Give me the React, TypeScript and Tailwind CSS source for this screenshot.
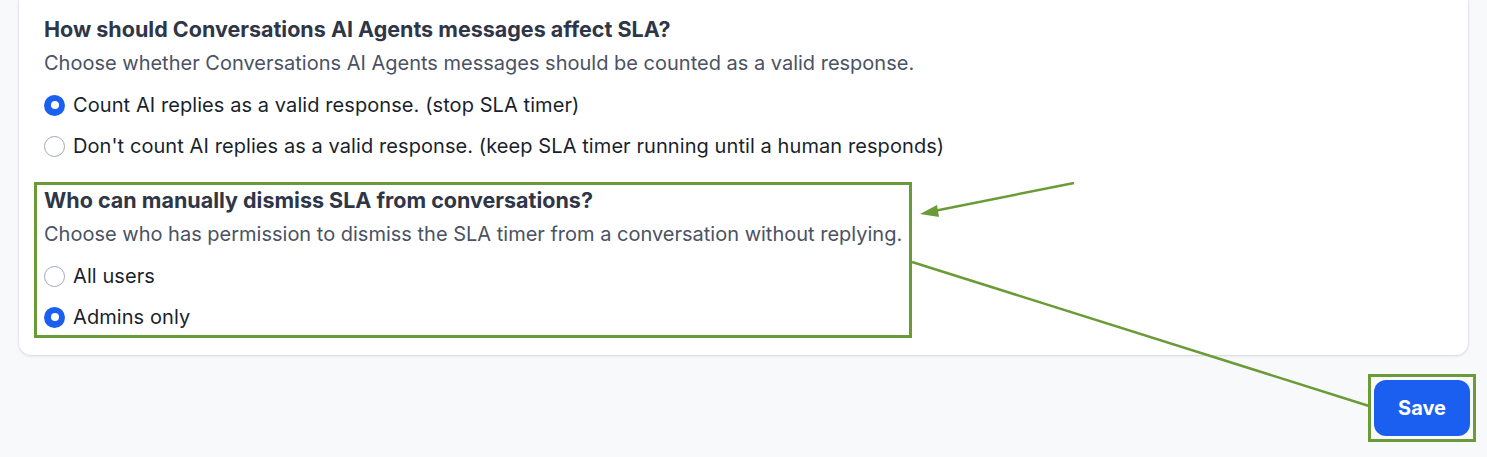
import React from "react";

type Option = { label: string; checked: boolean };

function Radio({ checked }: { checked: boolean }) {
  return checked ? (
    <span className="flex h-[21px] w-[21px] shrink-0 items-center justify-center rounded-full bg-[#1a5ff0]">
      <span className="h-[8px] w-[8px] rounded-full bg-white" />
    </span>
  ) : (
    <span className="h-[21px] w-[21px] shrink-0 rounded-full border-[1.5px] border-[#a0a8b8] bg-white" />
  );
}

function RadioRow({ option }: { option: Option }) {
  return (
    <label className="flex h-[28px] items-center gap-[8px] text-[20px] leading-[28px] tracking-[0.08px] text-[#1a1f2c]">
      <Radio checked={option.checked} />
      <span>{option.label}</span>
    </label>
  );
}

function Section({
  title,
  description,
  options,
}: {
  title: string;
  description: string;
  options: Option[];
}) {
  return (
    <div className="flex flex-col">
      <h3 className="text-[21.5px] font-bold leading-[28px] text-[#2e3647]">{title}</h3>
      <p className="mt-[6px] text-[20px] leading-[28px] text-[#4a5263]">{description}</p>
      <div className="mt-[14px] flex flex-col gap-[13px]">
        {options.map((o) => (
          <RadioRow key={o.label} option={o} />
        ))}
      </div>
    </div>
  );
}

export default function App() {
  return (
    <div
      className="relative h-[457px] w-full overflow-hidden bg-[#f8f9fb]"
      style={{ fontFamily: "Inter, 'Noto Sans', sans-serif" }}
    >
      <div className="ml-[19px] w-[1449px] rounded-b-[12px] bg-white pb-[17px] pl-[15px] pt-[15px] shadow-[0_1px_3px_rgba(16,24,40,0.12),0_0_0_1px_rgba(16,24,40,0.04)]">
        <div className="pl-[10px]">
          <Section
            title="How should Conversations AI Agents messages affect SLA?"
            description="Choose whether Conversations AI Agents messages should be counted as a valid response."
            options={[
              { label: "Count AI replies as a valid response. (stop SLA timer)", checked: true },
              {
                label:
                  "Don't count AI replies as a valid response. (keep SLA timer running until a human responds)",
                checked: false,
              },
            ]}
          />
        </div>
        <div className="mt-[22px] w-[878px] border-[3px] border-[#6b9b37] pb-[4px] pl-[7px] pt-[1px]">
          <Section
            title="Who can manually dismiss SLA from conversations?"
            description="Choose who has permission to dismiss the SLA timer from a conversation without replying."
            options={[
              { label: "All users", checked: false },
              { label: "Admins only", checked: true },
            ]}
          />
        </div>
      </div>

      <div className="mt-[19px] flex justify-end pr-[11px]">
        <div className="border-[3px] border-[#6b9b37] p-[3px]">
          <button className="flex h-[56px] w-[96px] items-center justify-center rounded-[12px] bg-[#1a5ff0] text-[20px] font-bold text-white">
            Save
          </button>
        </div>
      </div>

      {/* callout arrows */}
      <svg className="pointer-events-none absolute inset-0" width="1487" height="457">
        <line x1="1074" y1="183" x2="934" y2="211" stroke="#6b9b37" strokeWidth="2.5" />
        <polygon points="920,214 937,205 939,217" fill="#6b9b37" />
        <line x1="912" y1="262" x2="1369" y2="406" stroke="#6b9b37" strokeWidth="2.5" />
      </svg>
    </div>
  );
}
